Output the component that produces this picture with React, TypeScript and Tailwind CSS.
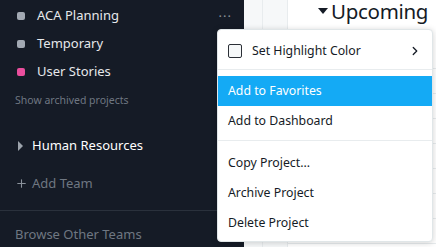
import { ChevronRight, Plus } from 'lucide-react'

const PROJECTS = [
  { name: 'ACA Planning', color: 'bg-[#a2a9b3]' },
  { name: 'Temporary', color: 'bg-[#a2a9b3]' },
  { name: 'User Stories', color: 'bg-[#ea4e9d]' },
]

const FONT = { fontFamily: '"Segoe UI", "Noto Sans", "Open Sans", sans-serif' }

function MenuItem({ label, active }: { label: string; active?: boolean }) {
  return (
    <div
      className={`h-[30px] flex items-center px-[10px] text-[12.3px] ${
        active ? 'bg-[#14aaf5] text-white' : 'text-[#151b26]'
      }`}
    >
      {label}
    </div>
  )
}

export default function App() {
  return (
    <div className="relative w-[436px] h-[247px] overflow-hidden flex bg-white" style={FONT}>
      {/* sidebar */}
      <div className="w-[244px] shrink-0 h-full bg-[#151b26] flex flex-col">
        <div className="pt-[2px]">
          {PROJECTS.map((p) => (
            <div key={p.name} className="h-[28px] flex items-center pl-[17px] pr-[12px]">
              <span className={`w-[8px] h-[8px] rounded-[2px] ${p.color}`} />
              <span className="ml-[12px] text-[13px] text-[#e6e8eb] flex-1">{p.name}</span>
              {p.name === 'ACA Planning' && (
                <span className="text-[#8b939c] text-[13px] tracking-[1px] -mt-[6px]">...</span>
              )}
            </div>
          ))}
        </div>
        <div className="h-[30px] flex items-center pl-[15px] text-[10.5px] text-[#6f7782]">
          Show archived projects
        </div>
        <div className="h-[31px] mt-[15px] flex items-center pl-[18px]">
          <span className="w-0 h-0 border-y-[5px] border-y-transparent border-l-[5px] border-l-[#9ca3ab]" />
          <span className="ml-[9px] text-[13px] text-white">Human Resources</span>
        </div>
        <div className="h-[30px] mt-[8px] flex items-center pl-[15px] text-[#6f7782]">
          <Plus size={13} strokeWidth={2} className="text-[#8a929b]" />
          <span className="ml-[4px] text-[13px]">Add Team</span>
        </div>
        <div className="mt-[12px] mr-[27px] border-t border-[#2a313c]" />
        <div className="h-[24px] mt-[12px] flex items-center pl-[15px] text-[13px] text-[#6f7782]">
          Browse Other Teams
        </div>
      </div>

      {/* main area */}
      <div className="w-[19px] shrink-0 h-full bg-[#f6f8f9] border-r border-[#e8ecee]" />
      <div className="w-[25px] shrink-0 h-full bg-[#f6f8f9] border-r border-[#e8ecee]" />
      <div className="flex-1 h-full flex flex-col">
        <div className="h-[22px] flex items-center pl-[30px]">
          <span className="w-0 h-0 border-x-[5px] border-x-transparent border-t-[6px] border-t-[#151b26]" />
          <span className="ml-[3px] text-[20.5px] tracking-[-0.3px] text-[#151b26] leading-[22px] whitespace-nowrap">
            Upcoming
          </span>
        </div>
        <div className="mt-[22px] flex flex-col">
          {[0, 1, 2, 3, 4, 5, 6, 7].map((i) => (
            <div key={i} className="h-[25px] border-b border-[#e8ecee]" />
          ))}
        </div>
      </div>

      {/* context menu */}
      <div className="absolute left-[217px] top-[29px] w-[216px] bg-white border border-[#e0e6e8] rounded-[4px] shadow-[0_1px_6px_rgba(0,0,0,0.18)] pt-[6px] pb-[3px]">
        <div className="h-[30px] flex items-center pl-[10px] pr-[10px] text-[12.3px] text-[#151b26]">
          <span className="w-[14px] h-[14px] rounded-[2px] border border-[#2b2f36] bg-[#f6f8f9]" />
          <span className="ml-[10px] flex-1">Set Highlight Color</span>
          <ChevronRight size={14} strokeWidth={2.2} className="text-[#151b26]" />
        </div>
        <div className="mt-[3px] border-t border-[#e8ecee]" />
        <div className="mt-[6px]">
          <MenuItem label="Add to Favorites" active />
          <MenuItem label="Add to Dashboard" />
        </div>
        <div className="mt-[4px] border-t border-[#e8ecee]" />
        <div className="mt-[7px]">
          <MenuItem label="Copy Project..." />
          <MenuItem label="Archive Project" />
          <MenuItem label="Delete Project" />
        </div>
      </div>
    </div>
  )
}
